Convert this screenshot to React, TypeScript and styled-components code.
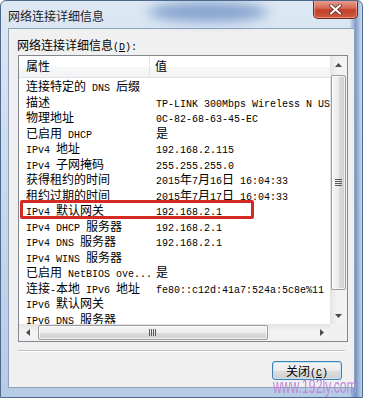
import React from 'react';
import styled, { createGlobalStyle } from 'styled-components';

const Global = createGlobalStyle`
  html, body { margin: 0; padding: 0; background: #ffffff; }
  body {
    width: 365px; height: 400px; overflow: hidden;
    font-family: "Noto Sans CJK SC", "DejaVu Sans", sans-serif;
    color: #000;
  }
`;

const Window = styled.div`
  position: relative;
  box-sizing: border-box;
  width: 363px;
  height: 398px;
  border: 1px solid #4d6a8e;
  border-radius: 6px 6px 0 0;
  background:
    linear-gradient(90deg, transparent 96.5%, rgba(55, 95, 165, 0.55) 98.2%, rgba(200, 215, 235, 0.6) 100%),
    linear-gradient(180deg, #dde8f4 0%, #cfdcee 35%, #b6cbe5 100%);
  display: flex;
  flex-direction: column;
  padding: 0 7px 9px 7px;
  overflow: hidden;
`;

const TitleBar = styled.div`
  position: relative;
  flex: none;
  height: 27px;
  display: flex;
  align-items: flex-start;
  justify-content: space-between;
`;

const GlassBlob = styled.div`
  position: absolute;
  left: 140px;
  top: 1px;
  width: 120px;
  height: 20px;
  border-radius: 50%;
  background: #4f78b8;
  opacity: 0.6;
  filter: blur(6px);
`;

const Title = styled.div`
  position: relative;
  margin-top: 7px;
  font-size: 12px;
  line-height: 16px;
  height: 16px;
  color: #1e1e1e;
`;

const CloseButton = styled.div`
  position: relative;
  width: 45px;
  height: 19px;
  margin-top: -1px;
  margin-right: -3px;
  box-sizing: border-box;
  border: 1px solid #6b2a20;
  border-top: none;
  border-radius: 0 0 5px 5px;
  background: linear-gradient(180deg, #e9a595 0%, #d46a55 45%, #c2412b 55%, #cf5a3e 100%);
  box-shadow: inset 0 0 0 1px rgba(255, 200, 190, 0.5);
  display: flex;
  align-items: center;
  justify-content: center;
`;

const Client = styled.div`
  flex: 1;
  box-sizing: border-box;
  border: 1px solid #8fa3bd;
  background: #f0f0f0;
  display: flex;
  flex-direction: column;
  padding: 8px 6px 0 8px;
`;

const Label = styled.div`
  flex: none;
  height: 16px;
  font-size: 12px;
  line-height: 16px;
  white-space: nowrap;
  overflow: visible;
`;

const Latin = styled.span`
  font-family: "Liberation Mono", "DejaVu Sans Mono", monospace;
  font-size: 10px;
  line-height: 1;
`;

const ListBox = styled.div`
  position: relative;
  flex: none;
  margin: 2px 0 0 1px;
  width: 330px;
  height: 287px;
  box-sizing: border-box;
  border: 1px solid #828790;
  background: #fff;
  display: grid;
  grid-template-columns: 1fr 17px;
  grid-template-rows: 1fr 17px;
`;

const Viewport = styled.div`
  overflow: hidden;
  display: flex;
  flex-direction: column;
`;

const Header = styled.div`
  flex: none;
  display: grid;
  grid-template-columns: 131px 1fr;
  height: 22px;
  box-sizing: border-box;
  border-bottom: 1px solid #e2e3e6;
  background: linear-gradient(180deg, #ffffff 0%, #ffffff 50%, #f7f8fa 51%, #f1f2f4 100%);
  font-size: 12px;
  line-height: 20px;
`;

const HeaderCell = styled.div<{ $first?: boolean }>`
  padding-left: ${p => (p.$first ? '7px' : '5px')};
  border-right: ${p => (p.$first ? '1px solid #e3e5e8' : 'none')};
`;

const Rows = styled.div`
  position: relative;
  flex: 1;
  overflow: hidden;
`;

const Row = styled.div`
  display: grid;
  grid-template-columns: 131px 1fr;
  height: 15.5px;
  line-height: 15.5px;
  font-size: 12px;
  white-space: nowrap;
`;

const KeyCell = styled.div`
  padding-left: 7px;
  overflow: hidden;
`;

const ValueCell = styled.div`
  padding-left: 6px;
`;

const Highlight = styled.div`
  position: absolute;
  left: 1px;
  top: 122px;
  width: 234px;
  height: 19px;
  box-sizing: border-box;
  border: 3px solid #d42a22;
  border-radius: 2px;
`;

const VScroll = styled.div`
  display: flex;
  flex-direction: column;
  background: linear-gradient(90deg, #e3e3e3 0%, #f2f2f2 40%, #f2f2f2 100%);
`;

const HScroll = styled.div`
  display: flex;
  background: linear-gradient(180deg, #e3e3e3 0%, #f2f2f2 40%, #f2f2f2 100%);
`;

const Corner = styled.div`
  background: #f0f0f0;
`;

const ArrowBtn = styled.div`
  flex: none;
  width: 17px;
  height: 17px;
  display: flex;
  align-items: center;
  justify-content: center;
`;

const Track = styled.div<{ $vertical?: boolean }>`
  flex: 1;
  display: flex;
  flex-direction: ${p => (p.$vertical ? 'column' : 'row')};
  padding: ${p => (p.$vertical ? '2px 0 0 0' : '0 0 0 2px')};
`;

const Thumb = styled.div<{ $vertical?: boolean }>`
  box-sizing: border-box;
  ${p => (p.$vertical ? 'width: 15px; height: 215px; margin-left: 1px;' : 'height: 15px; width: 230px; margin-top: 1px;')}
  border: 1px solid #9b9b9b;
  border-radius: 2px;
  background: ${p =>
    p.$vertical
      ? 'linear-gradient(90deg, #f5f5f5 0%, #ececec 50%, #dcdcdc 51%, #d0d0d0 100%)'
      : 'linear-gradient(180deg, #f5f5f5 0%, #ececec 50%, #dcdcdc 51%, #d0d0d0 100%)'};
  box-shadow: inset 0 0 0 1px rgba(255, 255, 255, 0.7);
  display: flex;
  align-items: center;
  justify-content: center;
`;

const Separator = styled.div`
  flex: none;
  margin: 8px 0 0 1px;
  width: 327px;
  border-top: 1px solid #c2c2c2;
  border-bottom: 1px solid #ffffff;
`;

const ButtonRow = styled.div`
  flex: none;
  display: flex;
  justify-content: flex-end;
  padding-right: 6px;
  margin-top: 9px;
`;

const PushButton = styled.div`
  width: 70px;
  height: 19px;
  box-sizing: border-box;
  border: 1px solid #3c7fb1;
  border-radius: 3px;
  background: linear-gradient(180deg, #f4f4f4 0%, #ebebeb 50%, #dddddd 51%, #cfcfcf 100%);
  box-shadow: inset 0 0 0 1px #bfe6f7;
  font-size: 12px;
  line-height: 17px;
  text-align: center;
  white-space: nowrap;
`;

const Watermark = styled.div`
  position: absolute;
  left: 272px;
  top: 374px;
  font-family: "Liberation Sans", Arial, sans-serif;
  font-size: 21px;
  line-height: 21px;
  color: #bd88d4;
  transform: scaleX(0.58);
  transform-origin: left top;
  white-space: nowrap;
`;

const mixed = (text: string) =>
  text.split(/([\x20-\x7e]+)/).map((s, i) =>
    /^[\x20-\x7e]+$/.test(s) ? <Latin key={i}>{s}</Latin> : <React.Fragment key={i}>{s}</React.Fragment>
  );

const rows: [string, string][] = [
  ['连接特定的 DNS 后缀', ''],
  ['描述', 'TP-LINK 300Mbps Wireless N USB Adapter'],
  ['物理地址', '0C-82-68-63-45-EC'],
  ['已启用 DHCP', '是'],
  ['IPv4 地址', '192.168.2.115'],
  ['IPv4 子网掩码', '255.255.255.0'],
  ['获得租约的时间', '2015年7月16日 16:04:33'],
  ['租约过期的时间', '2015年7月17日 16:04:33'],
  ['IPv4 默认网关', '192.168.2.1'],
  ['IPv4 DHCP 服务器', '192.168.2.1'],
  ['IPv4 DNS 服务器', '192.168.2.1'],
  ['IPv4 WINS 服务器', ''],
  ['已启用 NetBIOS ove...', '是'],
  ['连接-本地 IPv6 地址', 'fe80::c12d:41a7:524a:5c8e%11'],
  ['IPv6 默认网关', ''],
  ['IPv6 DNS 服务器', ''],
];

const Arrow = ({ dir }: { dir: 'up' | 'down' | 'left' | 'right' }) => {
  const pts = {
    up: '0,4 7,4 3.5,0',
    down: '0,0 7,0 3.5,4',
    left: '4,0 4,7 0,3.5',
    right: '0,0 0,7 4,3.5',
  }[dir];
  const vertical = dir === 'up' || dir === 'down';
  return (
    <svg width={vertical ? 7 : 4} height={vertical ? 4 : 7} viewBox={vertical ? '0 0 7 4' : '0 0 4 7'}>
      <polygon points={pts} fill="#4d4d4d" />
    </svg>
  );
};

const Grip = ({ vertical }: { vertical?: boolean }) =>
  vertical ? (
    <svg width="7" height="8" viewBox="0 0 7 8">
      {[0, 2, 4, 6].map(y => (
        <rect key={y} x="0" y={y} width="7" height="1" fill="#5a5a5a" />
      ))}
    </svg>
  ) : (
    <svg width="8" height="7" viewBox="0 0 8 7">
      {[0, 2, 4, 6].map(x => (
        <rect key={x} x={x} y="0" width="1" height="7" fill="#5a5a5a" />
      ))}
    </svg>
  );

export default function App() {
  return (
    <>
      <Global />
      <Window>
        <TitleBar>
          <GlassBlob />
          <Title>网络连接详细信息</Title>
          <CloseButton>
            <svg width="13" height="11" viewBox="0 0 13 11">
              <path d="M2 1.5 L11 9.5 M11 1.5 L2 9.5" stroke="#5a1d14" strokeWidth="3.6" strokeLinecap="round" />
              <path d="M2 1.5 L11 9.5 M11 1.5 L2 9.5" stroke="#ffffff" strokeWidth="2.2" strokeLinecap="round" />
            </svg>
          </CloseButton>
        </TitleBar>
        <Client>
          <Label>
            网络连接详细信息<Latin>(<u>D</u>):</Latin>
          </Label>
          <ListBox>
            <Viewport>
              <Header>
                <HeaderCell $first>属性</HeaderCell>
                <HeaderCell>值</HeaderCell>
              </Header>
              <Rows>
                {rows.map(([k, v]) => (
                  <Row key={k}>
                    <KeyCell>{mixed(k)}</KeyCell>
                    <ValueCell>{mixed(v)}</ValueCell>
                  </Row>
                ))}
                <Highlight />
              </Rows>
            </Viewport>
            <VScroll>
              <ArrowBtn>
                <Arrow dir="up" />
              </ArrowBtn>
              <Track $vertical>
                <Thumb $vertical>
                  <Grip vertical />
                </Thumb>
              </Track>
              <ArrowBtn>
                <Arrow dir="down" />
              </ArrowBtn>
            </VScroll>
            <HScroll>
              <ArrowBtn>
                <Arrow dir="left" />
              </ArrowBtn>
              <Track>
                <Thumb>
                  <Grip />
                </Thumb>
              </Track>
              <ArrowBtn>
                <Arrow dir="right" />
              </ArrowBtn>
            </HScroll>
            <Corner />
          </ListBox>
          <Separator />
          <ButtonRow>
            <PushButton>
              关闭<Latin>(<u>C</u>)</Latin>
            </PushButton>
          </ButtonRow>
        </Client>
        <Watermark>www.192ly.com</Watermark>
      </Window>
    </>
  );
}
